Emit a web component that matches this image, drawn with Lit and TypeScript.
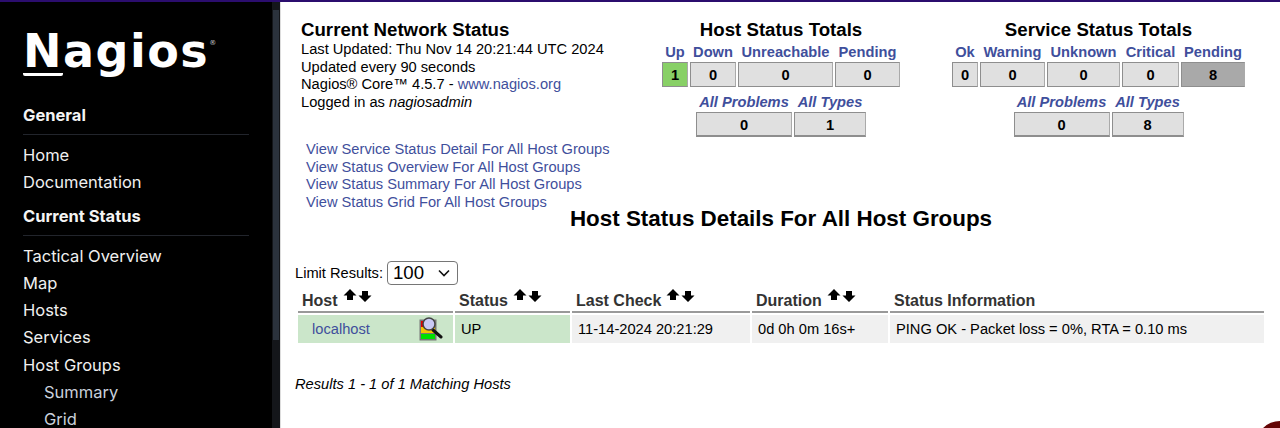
import { LitElement, html, css } from "lit";
import { customElement } from "lit/decorators.js";

const cell = (label: string, w: number, value: string, cls = "") => ({ label, w, value, cls });

const hostTop = [cell("Up", 26, "1", "ok"), cell("Down", 46, "0"), cell("Unreachable", 95, "0"), cell("Pending", 65, "0")];
const hostBottom = [cell("All Problems", 96, "0"), cell("All Types", 72, "1")];
const svcTop = [cell("Ok", 26, "0"), cell("Warning", 65, "0"), cell("Unknown", 73, "0"), cell("Critical", 57, "0"), cell("Pending", 64, "8", "pend")];
const svcBottom = [cell("All Problems", 96, "0"), cell("All Types", 72, "8")];

const arrows = html`<svg class="arrows" width="29" height="16" viewBox="0 0 29 16">
  <path d="M7 1 L13.5 7.5 L10 7.5 L10 12 L4 12 L4 7.5 L0.5 7.5 Z" fill="#000"></path>
  <path d="M19 3 L25 3 L25 7.5 L28.5 7.5 L22 14 L15.5 7.5 L19 7.5 Z" fill="#000"></path>
</svg>`;

@customElement("app-root")
export class AppRoot extends LitElement {
  static styles = css`
    :host { display: block; width: 1280px; height: 428px; overflow: hidden; position: relative; background: #fff; font-family: "Liberation Sans", Arial, sans-serif; color: #000; }
    .page { display: flex; height: 428px; border-top: 2px solid #2b0d6e; box-sizing: border-box; }
    .side { width: 272px; flex: none; background: #000; color: #fff; font-family: Inter, Roboto, sans-serif; padding: 24px 0 0 23px; box-sizing: border-box; overflow: hidden; }
    .logo { display: flex; align-items: flex-start; height: 56px; margin-bottom: 21px; font-family: "DejaVu Sans", sans-serif; font-weight: 700; color: #fff; font-size: 46px; line-height: 50px; letter-spacing: 1.5px; }
    .logo .n { border-bottom: 3px solid #fff; border-radius: 2px; height: 47px; line-height: 50px; }
    .logo sup { font-size: 7px; line-height: 10px; letter-spacing: 0; margin: 12px 0 0 0; color: #ccc; font-weight: 400; }
    .head { font-size: 16.5px; font-weight: 700; line-height: 24px; width: 226px; padding-bottom: 7px; border-bottom: 1px solid #22252c; margin-bottom: 7px; color: #f4f4f4; }
    .item { font-size: 16.5px; line-height: 27.3px; color: #f0f0f0; }
    .item.sub { padding-left: 21px; color: #c9d0dc; }
    .gap { height: 7px; }
    .bar { width: 8px; flex: none; background: #14161a; display: flex; flex-direction: column; align-items: center; padding-top: 8px; box-sizing: border-box; }
    .thumb { width: 6px; height: 330px; background: #2b323c; }
    .main { flex: 1; border-left: 1px solid #ddd; position: relative; min-width: 0; }
    .top { display: flex; height: 204px; }
    .info { width: 381px; flex: none; padding: 17px 0 0 20px; box-sizing: border-box; font-size: 14.67px; line-height: 17.7px; }
    h2 { margin: 0; font-size: 18.67px; line-height: 22px; font-weight: 700; }
    .info a, .links a, .host a, .totals .lab { color: #3f4f9c; text-decoration: none; }
    .links { margin: 29px 0 0 5px; }
    .links a { display: block; }
    .totals { flex: none; padding-top: 17px; display: flex; flex-direction: column; align-items: center; }
    .totals.h { width: 238px; }
    .totals.s { width: 293px; margin-left: 52px; }
    .totals h2 { margin-bottom: 1px; }
    .row { display: flex; gap: 2px; }
    .col { display: flex; flex-direction: column; align-items: stretch; }
    .lab { font-size: 14.67px; line-height: 20px; font-weight: 700; text-align: center; white-space: nowrap; display: flex; justify-content: center; }
    .row.b { margin-top: 5px; }
    .row.b .lab { font-style: italic; }
    .val { height: 25px; box-sizing: border-box; background: #e0e0e0; border: 1px solid #8e8e8e; border-right-color: #aaa; font-size: 14.67px; font-weight: 700; line-height: 24px; text-align: center; }
    .val.ok { background: #88d066; }
    .val.pend { background: #a9a9a9; }
    .row.b .val { border-top-width: 1px; border-bottom: 2px solid #8e8e8e; }
    h1 { margin: 0; text-align: center; font-size: 22.4px; line-height: 26px; font-weight: 700; width: 998px; margin-left: 1px; }
    .limit { display: flex; align-items: center; margin: 28px 0 0 14px; font-size: 14.67px; height: 26px; gap: 4px; }
    .fake { width: 71px; height: 24px; box-sizing: border-box; border: 1px solid #767676; border-radius: 4px; background: #fff; display: flex; align-items: center; justify-content: space-between; padding: 0 7px 0 5px; font-size: 18.67px; }
    table { margin: 4px 0 0 15px; display: grid; grid-template-columns: 157px 116px 180px 136px 374px; column-gap: 2px; width: max-content; }
    .th { font-size: 16px; font-weight: 700; height: 23px; color: #2a2a2a; padding-left: 4px; box-sizing: border-box; border-bottom: 2px solid #999; display: flex; align-items: flex-end; gap: 5px; line-height: 20px; color: #333; margin-bottom: 2px; }
    .arrows { margin-bottom: 7px; }
    .td { background: #f0f0f0; height: 28px; line-height: 28px; font-size: 14.67px; padding-left: 6px; box-sizing: border-box; white-space: nowrap; }
    .td.up { background: #cbe6ca; }
    .host { display: flex; justify-content: space-between; align-items: center; padding: 0 10px 0 14px; }
    .host svg { display: block; }
    .res { margin: 32px 0 0 14px; font-style: italic; font-size: 14.67px; line-height: 18px; }
    .blob { position: absolute; left: 1256px; top: 421px; width: 48px; height: 48px; border-radius: 50%; background: #640505; }
  `;

  private col(c: { label: string; w: number; value: string; cls: string }) {
    return html`<div class="col" style="width:${c.w}px"><div class="lab">${c.label}</div><div class="val ${c.cls}">${c.value}</div></div>`;
  }

  render() {
    return html`
      <div class="page">
        <div class="side">
          <div class="logo"><span class="n">N</span><span>agios</span><sup>®</sup></div>
          <div class="head">General</div>
          <div class="item">Home</div>
          <div class="item">Documentation</div>
          <div class="gap"></div>
          <div class="head">Current Status</div>
          <div class="item">Tactical Overview</div>
          <div class="item">Map</div>
          <div class="item">Hosts</div>
          <div class="item">Services</div>
          <div class="item">Host Groups</div>
          <div class="item sub">Summary</div>
          <div class="item sub">Grid</div>
        </div>
        <div class="bar"><div class="thumb"></div></div>
        <div class="main">
          <div class="top">
            <div class="info">
              <h2>Current Network Status</h2>
              <div>Last Updated: Thu Nov 14 20:21:44 UTC 2024</div>
              <div>Updated every 90 seconds</div>
              <div>Nagios® Core™ 4.5.7 - <a>www.nagios.org</a></div>
              <div>Logged in as <i>nagiosadmin</i></div>
              <div class="links">
                <a>View Service Status Detail For All Host Groups</a>
                <a>View Status Overview For All Host Groups</a>
                <a>View Status Summary For All Host Groups</a>
                <a>View Status Grid For All Host Groups</a>
              </div>
            </div>
            <div class="totals h">
              <h2>Host Status Totals</h2>
              <div class="row">${hostTop.map((c) => this.col(c))}</div>
              <div class="row b">${hostBottom.map((c) => this.col(c))}</div>
            </div>
            <div class="totals s">
              <h2>Service Status Totals</h2>
              <div class="row">${svcTop.map((c) => this.col(c))}</div>
              <div class="row b">${svcBottom.map((c) => this.col(c))}</div>
            </div>
          </div>
          <h1>Host Status Details For All Host Groups</h1>
          <div class="limit">
            <span>Limit Results:</span>
            <div class="fake"><span>100</span>
              <svg width="12" height="8" viewBox="0 0 12 8"><path d="M1 1.5 L6 6.5 L11 1.5" fill="none" stroke="#111" stroke-width="1.6"></path></svg>
            </div>
          </div>
          <div class="table" style="display:grid;grid-template-columns:155px 115px 178px 136px 374px;column-gap:2px;margin:4px 0 0 17px;width:max-content">
            <div class="th">Host ${arrows}</div>
            <div class="th">Status ${arrows}</div>
            <div class="th">Last Check ${arrows}</div>
            <div class="th">Duration ${arrows}</div>
            <div class="th">Status Information</div>
            <div class="td up host"><a>localhost</a>
              <svg width="24" height="24" viewBox="0 0 24 24">
                <rect x="0.5" y="2.5" width="17" height="21" fill="#777"></rect>
                <rect x="2" y="4" width="4" height="6" fill="#e00000"></rect>
                <rect x="2" y="10" width="14" height="6" fill="#f5c400"></rect>
                <rect x="2" y="17" width="14" height="5" fill="#00e000"></rect>
                <path d="M14 13 L22 20" stroke="#111" stroke-width="3" stroke-linecap="round"></path>
                <circle cx="10" cy="7" r="6" fill="#c9c9f5" stroke="#444" stroke-width="1.5"></circle>
              </svg>
            </div>
            <div class="td up">UP</div>
            <div class="td">11-14-2024 20:21:29</div>
            <div class="td">0d 0h 0m 16s+</div>
            <div class="td">PING OK - Packet loss = 0%, RTA = 0.10 ms</div>
          </div>
          <div class="res">Results 1 - 1 of 1 Matching Hosts</div>
        </div>
      </div>
      <div class="blob"></div>
    `;
  }
}
